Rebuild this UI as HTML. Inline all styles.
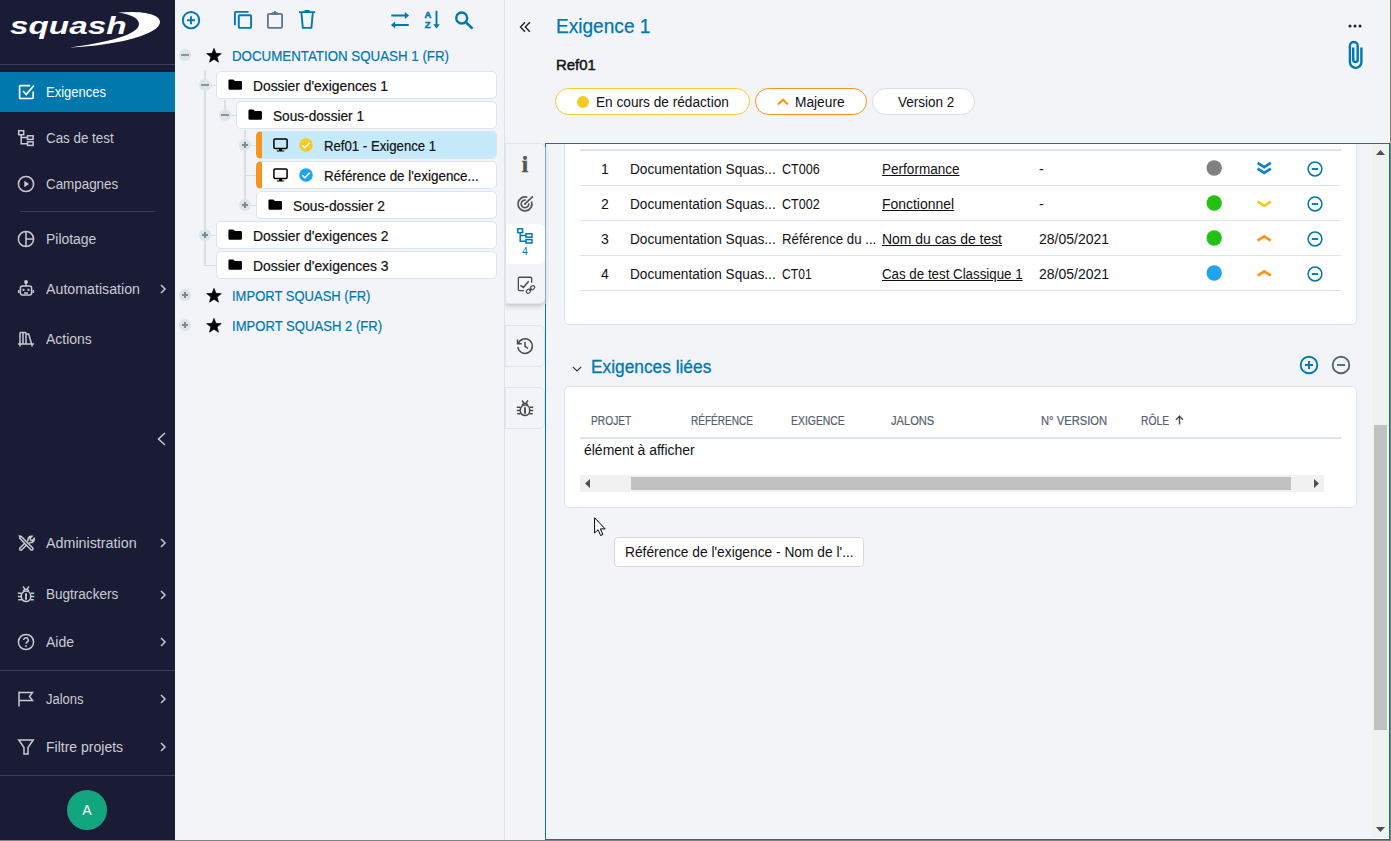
<!DOCTYPE html>
<html lang="fr">
<head>
<meta charset="utf-8">
<title>Exigence 1</title>
<style>
*{box-sizing:border-box;margin:0;padding:0}
html,body{width:1391px;height:841px;overflow:hidden;background:#f3f4f8}
body{position:relative;font-family:"Liberation Sans",sans-serif;font-size:14px;color:#111;}
.abs{position:absolute}
.t,.c,.tt,.it,.th{transform-origin:0 50%}
.t{position:absolute;white-space:nowrap;line-height:20px;height:20px}
svg{position:absolute;overflow:visible}
/* sidebar */
#side{position:absolute;left:0;top:0;width:175px;height:841px;background:#1a1c36}
#side .sep{position:absolute;height:1px;background:#3a3c63}
#side .it{position:absolute;left:46px;color:#cbcbd3;font-size:14px;line-height:20px;height:20px;white-space:nowrap}
#side .act{position:absolute;left:0;top:72px;width:175px;height:40px;background:#0078ae}
#side svg{stroke:#c9c9d2;fill:none;stroke-width:1.5}
/* tree */
#tree{position:absolute;left:175px;top:0;width:330px;height:841px;background:#f3f4f8;border-right:1px solid #dae3eb}
.box{position:absolute;height:28px;background:#fff;border:1px solid #dbe5ee;border-radius:5px}
.tl{position:absolute;background:#dddddd}
.tg{position:absolute;width:12px;height:12px;border-radius:50%;background:#dbe5ec}
.tg:before{content:"";position:absolute;left:2px;top:5px;width:8px;height:2px;background:#929292}
.tg.p:before{left:3px;top:5px;width:6px;height:2px;background:#868686}.tg.p:after{content:"";position:absolute;left:5px;top:3px;width:2px;height:6px;background:#868686}
.tt{position:absolute;white-space:nowrap;line-height:20px;height:20px;font-size:14px;color:#111;-webkit-text-stroke:.2px currentColor}
.pj{color:#0078ae}
/* main */
#main{position:absolute;left:505px;top:0;width:886px;height:841px;background:#f3f4f8}
.pill{position:absolute;top:88px;height:27px;border-radius:14px;background:#fff;border:1px solid #d9dfe6;font-size:14px;line-height:25px;white-space:nowrap}
#content{position:absolute;left:545px;top:143px;width:845px;height:697px;border:1px solid #0078ae;background:#f3f4f8}
.card{position:absolute;background:#fff;border:1px solid #dbe5ee;border-radius:5px}
.hl{position:absolute;left:580px;width:761px;height:1px;background:#dbe5ee}
.c{position:absolute;white-space:nowrap;line-height:20px;height:20px;font-size:14px;color:#111}
.u{text-decoration:underline}
.dot{position:absolute;width:15px;height:15px;border-radius:50%}
.th{position:absolute;top:411px;white-space:nowrap;line-height:20px;height:20px;font-size:12px;color:#55606b;-webkit-text-stroke:.2px #55606b}
</style>
</head>
<body>
<div id="side">
  <!-- logo -->
  <svg width="175" height="64" style="left:0;top:0;stroke:none" viewBox="0 0 175 64">
    <path d="M118 12.5 C142 10.5 160 14 160 22 C160 34 118 45.5 70 47.5 C106 42.5 139 35 139 24 C139 18 131 14.5 118 12.5 Z" fill="#fff" stroke="none"/>
    <text x="10" y="33.5" fill="#fff" stroke="none" font-family="Liberation Sans, sans-serif" font-weight="bold" font-style="italic" font-size="23.5" textLength="116.5" lengthAdjust="spacingAndGlyphs">squash</text>
  </svg>
  <div class="sep" style="left:0;top:64px;width:175px"></div>
  <div class="act"></div>
  <div class="it" style="transform:scaleX(0.9289);top:82px;color:#fff">Exigences</div>
  <div class="it" style="transform:scaleX(0.9558);top:128px">Cas de test</div>
  <div class="it" style="transform:scaleX(0.9563);top:174px">Campagnes</div>
  <div class="sep" style="left:20px;top:211px;width:135px"></div>
  <div class="it" style="transform:scaleX(0.9942);top:229px">Pilotage</div>
  <div class="it" style="transform:scaleX(1.0150);top:279px">Automatisation</div>
  <div class="it" style="transform:scaleX(0.9973);top:329px">Actions</div>
  <div class="it" style="transform:scaleX(1.0214);top:533px">Administration</div>
  <div class="it" style="transform:scaleX(0.9665);top:584px">Bugtrackers</div>
  <div class="it" style="transform:scaleX(0.9989);top:632px">Aide</div>
  <div class="sep" style="left:0;top:670px;width:175px"></div>
  <div class="it" style="transform:scaleX(0.9266);top:689px">Jalons</div>
  <div class="it" style="transform:scaleX(1.0009);top:737px">Filtre projets</div>
  <div class="sep" style="left:0;top:775px;width:175px"></div>
  <div class="abs" style="left:67px;top:790px;width:40px;height:40px;border-radius:50%;background:#13a57d;color:#fff;font-size:14px;line-height:40px;text-align:center">A</div>
  <!-- icons -->
  <svg width="18" height="18" style="left:17.500px;top:83px;stroke:#fff;stroke-width:1.700" viewBox="0 0 18 18"><path d="M15.2 8.5v6a1 1 0 0 1-1 1H2.6a1 1 0 0 1-1-1V3.6a1 1 0 0 1 1-1h9.6"/><path d="M5 8l3.2 3.4L16 2.5"/></svg>
  <svg width="18" height="18" style="left:17px;top:129px" viewBox="0 0 18 18"><rect x="1.7" y="1.7" width="5" height="4"/><rect x="10.5" y="6.8" width="5.6" height="3.6"/><rect x="10.5" y="12.8" width="5.6" height="3.6"/><path d="M4.2 5.7v9h6.3M4.2 8.6h6.3"/></svg>
  <svg width="18" height="18" style="left:17px;top:175px" viewBox="0 0 18 18"><circle cx="9" cy="9" r="7.6"/><path d="M7.3 5.8v6.4L12 9z" fill="#c9c9d2" stroke="none"/></svg>
  <svg width="18" height="18" style="left:17px;top:230px" viewBox="0 0 18 18"><circle cx="9" cy="9" r="7.6"/><path d="M9 1.4v15.2M9 9h7.6"/></svg>
  <svg width="18" height="18" style="left:17px;top:279px" viewBox="0 0 18 18"><circle cx="9" cy="3" r="1.2" fill="#c9c9d2"/><path d="M9 4v3"/><rect x="3.400" y="7" width="11.200" height="9" rx="2"/><path d="M1.700 11v3M16.300 11v3M7 14h4"/><rect x="5.5" y="9.8" width="2" height="2" fill="#c9c9d2" stroke="none"/><rect x="10.5" y="9.8" width="2" height="2" fill="#c9c9d2" stroke="none"/></svg>
  <svg width="18" height="18" style="left:17px;top:330px" viewBox="0 0 18 18"><path d="M3 2.5v11.5M6 2.5v11.5M9 2.5v11.5M3 2.5h6M9 4.5l2.6-.7 3 10.2M1 14h16M3 14v2.5M15 14v2.5"/></svg>
  <svg width="9" height="14" style="left:157px;top:432px" viewBox="0 0 9 14"><path d="M8 1L1.5 7 8 13"/></svg>
  <svg width="18" height="18" style="left:17px;top:534px" viewBox="0 0 18 18"><path d="M2.5 2l1.8.5L13 11.2l2.8 2.8a1.3 1.3 0 0 1-1.8 1.8L11.2 13 2.9 4.300z"/><path d="M7.5 9.500L2.800 14.200a1.300 1.300 0 0 0 1.800 1.800L9.300 11.300M10 7.500l1-1a3.500 3.500 0 0 1 4-4.200l-2 2 .5 1.700 1.700.5 2-2a3.500 3.500 0 0 1-4.200 4l-1 1"/></svg>
  <svg width="18" height="18" style="left:17px;top:585px" viewBox="0 0 18 18"><path d="M4.300 10.800a4.700 4.700 0 0 1 9.400 0v1a4.700 4.700 0 0 1-9.400 0z"/><path d="M9 8.200v6.600" stroke-width="1.900"/><path d="M6 1.500l2 2.600M12 1.500l-2 2.600M.800 8.300h3.500M.800 11.500h3.500M1.300 14.800h3.200M13.700 8.300h3.500M13.700 11.500h3.500M13.500 14.800h3.200"/><path d="M6.200 6.300a2.900 2.900 0 0 1 5.600 0"/></svg>
  <svg width="18" height="18" style="left:17px;top:633px" viewBox="0 0 18 18"><circle cx="9" cy="9" r="7.600"/><path d="M6.700 7a2.300 2.300 0 1 1 3.300 2.100c-.7.400-1 .8-1 1.700"/><circle cx="9" cy="13" r=".9" fill="#c9c9d2" stroke="none"/></svg>
  <svg width="18" height="18" style="left:17px;top:690px" viewBox="0 0 18 18"><path d="M2 1.500v15M2 2.500h13.500l-3 4 3 4H2"/></svg>
  <svg width="18" height="18" style="left:17px;top:738px" viewBox="0 0 18 18"><path d="M1.800 2h14.400L11 9.500v6.500H7V9.500z"/></svg>
  <!-- chevrons -->
  <svg width="6" height="10" style="left:160px;top:284px" viewBox="0 0 6 10"><path d="M1 1l4 4-4 4"/></svg>
  <svg width="6" height="10" style="left:160px;top:538px" viewBox="0 0 6 10"><path d="M1 1l4 4-4 4"/></svg>
  <svg width="6" height="10" style="left:160px;top:590px" viewBox="0 0 6 10"><path d="M1 1l4 4-4 4"/></svg>
  <svg width="6" height="10" style="left:160px;top:637px" viewBox="0 0 6 10"><path d="M1 1l4 4-4 4"/></svg>
  <svg width="6" height="10" style="left:160px;top:694px" viewBox="0 0 6 10"><path d="M1 1l4 4-4 4"/></svg>
  <svg width="6" height="10" style="left:160px;top:742px" viewBox="0 0 6 10"><path d="M1 1l4 4-4 4"/></svg>
</div>

<div id="tree"></div>
<!-- toolbar -->
<svg width="20" height="20" style="left:181px;top:9.700px" viewBox="0 0 20 20" fill="none" stroke="#0078ae" stroke-width="1.900"><circle cx="10" cy="10.200" r="8.200"/><path d="M10 6.200v8M6 10.200h8"/></svg>
<svg width="20" height="20" style="left:233px;top:9px" viewBox="0 0 20 20" fill="none" stroke="#0078ae" stroke-width="1.900"><rect x="5.800" y="6.300" width="12.300" height="12.600" rx="1"/><path d="M1.900 16.200V4a1.100 1.100 0 0 1 1.100-1.100H15.500"/></svg>
<svg width="20" height="20" style="left:265px;top:9.600px" viewBox="0 0 20 20" fill="none" stroke="#5f7687" stroke-width="1.800"><rect x="2.900" y="3.900" width="14.200" height="14" rx="1.200"/><path d="M6.800 4.400V2.900h1.900a1.300 1.300 0 0 1 2.600 0h1.900v1.500z" fill="#5f7687" stroke-width="1"/></svg>
<svg width="20" height="20" style="left:297px;top:9px" viewBox="0 0 20 20" fill="none" stroke="#0078ae" stroke-width="1.900" stroke-linejoin="round"><path d="M2 3.100h16.200M8.300 2.900V1.900h3.600v1M4.400 3.500l1.400 15.400h8.600l1.400-15.400"/></svg>
<svg width="20" height="20" style="left:390px;top:10px" viewBox="0 0 20 20" fill="none" stroke="#0078ae" stroke-width="1.900"><path d="M1.300 5.500h15M18.700 15h-15"/><path d="M14.800 2l4.300 3.500-4.300 3.500zM5.200 11.500L.900 15l4.300 3.500z" fill="#0078ae" stroke="none"/></svg>
<svg width="20" height="20" style="left:422px;top:10px" viewBox="0 0 20 20" fill="none" stroke="#0078ae" stroke-width="1.900"><path d="M14.500 .800v14.500"/><path d="M11.200 14.300h6.600l-3.300 4.200z" fill="#0078ae" stroke="none"/><text x="2.500" y="7.800" font-family="Liberation Sans, sans-serif" font-weight="bold" font-size="9.500" fill="#0078ae" stroke="#0078ae" stroke-width=".5">A</text><text x="2.800" y="18" font-family="Liberation Sans, sans-serif" font-weight="bold" font-size="9.500" fill="#0078ae" stroke="#0078ae" stroke-width=".5">Z</text></svg>
<svg width="20" height="20" style="left:454px;top:10px" viewBox="0 0 20 20" fill="none" stroke="#0078ae" stroke-width="2.300"><circle cx="7.700" cy="8" r="5.500"/><path d="M11.700 12l6.800 6.600" stroke-width="2.600"/></svg>
<!-- tree lines -->
<div class="tl" style="left:204px;top:70px;width:2px;height:196px"></div>
<div class="tl" style="left:205px;top:85px;width:11px;height:1px"></div>
<div class="tl" style="left:205px;top:235px;width:11px;height:1px"></div>
<div class="tl" style="left:205px;top:265px;width:11px;height:1px"></div>
<div class="tl" style="left:224px;top:100px;width:2px;height:16px"></div>
<div class="tl" style="left:225px;top:115px;width:11px;height:1px"></div>
<div class="tl" style="left:244px;top:130px;width:2px;height:76px"></div>
<div class="tl" style="left:245px;top:145px;width:11px;height:1px"></div>
<div class="tl" style="left:245px;top:175px;width:11px;height:1px"></div>
<div class="tl" style="left:245px;top:205px;width:11px;height:1px"></div>
<!-- toggles -->
<div class="tg" style="left:179px;top:49px"></div>
<div class="tg" style="left:199px;top:79px"></div>
<div class="tg" style="left:219px;top:109px"></div>
<div class="tg p" style="left:239px;top:139px"></div>
<div class="tg p" style="left:239px;top:199px"></div>
<div class="tg p" style="left:199px;top:229px"></div>
<div class="tg p" style="left:179px;top:289px"></div>
<div class="tg p" style="left:179px;top:319px"></div>
<!-- boxes -->
<div class="box" style="left:216px;top:71px;width:281px"></div>
<div class="box" style="left:236px;top:101px;width:261px"></div>
<div class="box" style="left:256px;top:131px;width:241px;background:#c5ebfb;border-left:6px solid #f7941d"></div>
<div class="box" style="left:256px;top:161px;width:241px;border-left:6px solid #f7941d"></div>
<div class="box" style="left:256px;top:191px;width:241px"></div>
<div class="box" style="left:216px;top:221px;width:281px"></div>
<div class="box" style="left:216px;top:251px;width:281px"></div>
<!-- stars -->
<svg width="16" height="16" style="left:206px;top:48px" viewBox="0 0 16 16"><polygon points="8.00,0.30 9.94,5.33 15.32,5.62 11.14,9.02 12.53,14.23 8.00,11.30 3.47,14.23 4.86,9.02 0.68,5.62 6.06,5.33" fill="#000" stroke="#000" stroke-width=".6" stroke-linejoin="round"/></svg>
<svg width="16" height="16" style="left:206px;top:288px" viewBox="0 0 16 16"><polygon points="8.00,0.30 9.94,5.33 15.32,5.62 11.14,9.02 12.53,14.23 8.00,11.30 3.47,14.23 4.86,9.02 0.68,5.62 6.06,5.33" fill="#000" stroke="#000" stroke-width=".6" stroke-linejoin="round"/></svg>
<svg width="16" height="16" style="left:206px;top:318px" viewBox="0 0 16 16"><polygon points="8.00,0.30 9.94,5.33 15.32,5.62 11.14,9.02 12.53,14.23 8.00,11.30 3.47,14.23 4.86,9.02 0.68,5.62 6.06,5.33" fill="#000" stroke="#000" stroke-width=".6" stroke-linejoin="round"/></svg>
<!-- folders -->
<svg width="14.4" height="11.7" style="left:227.8px;top:79.2px" viewBox="0 0 16 13"><path d="M1.500 0.500h4.500l1.600 1.700h6.600a1.300 1.300 0 0 1 1.300 1.300v7.200a1.300 1.300 0 0 1-1.300 1.300H1.800a1.300 1.300 0 0 1-1.300-1.300V1.800a1.300 1.300 0 0 1 1-1.300z" fill="#000"/></svg>
<svg width="14.4" height="11.7" style="left:247.8px;top:109.2px" viewBox="0 0 16 13"><path d="M1.500 0.500h4.500l1.600 1.700h6.600a1.300 1.300 0 0 1 1.300 1.300v7.200a1.300 1.300 0 0 1-1.300 1.300H1.800a1.300 1.300 0 0 1-1.300-1.300V1.800a1.300 1.300 0 0 1 1-1.300z" fill="#000"/></svg>
<svg width="14.4" height="11.7" style="left:267.8px;top:199.2px" viewBox="0 0 16 13"><path d="M1.500 0.500h4.500l1.600 1.700h6.600a1.300 1.300 0 0 1 1.300 1.300v7.200a1.300 1.300 0 0 1-1.300 1.300H1.800a1.300 1.300 0 0 1-1.300-1.300V1.800a1.300 1.300 0 0 1 1-1.300z" fill="#000"/></svg>
<svg width="14.4" height="11.7" style="left:227.8px;top:229.2px" viewBox="0 0 16 13"><path d="M1.500 0.500h4.500l1.600 1.700h6.600a1.300 1.300 0 0 1 1.300 1.300v7.200a1.300 1.300 0 0 1-1.300 1.300H1.800a1.300 1.300 0 0 1-1.300-1.300V1.800a1.300 1.300 0 0 1 1-1.300z" fill="#000"/></svg>
<svg width="14.4" height="11.7" style="left:227.8px;top:259.2px" viewBox="0 0 16 13"><path d="M1.500 0.500h4.500l1.600 1.700h6.600a1.300 1.300 0 0 1 1.300 1.300v7.200a1.300 1.300 0 0 1-1.300 1.300H1.800a1.300 1.300 0 0 1-1.300-1.300V1.800a1.300 1.300 0 0 1 1-1.300z" fill="#000"/></svg>
<!-- monitors + status -->
<svg width="15" height="14" style="left:272.500px;top:138px" viewBox="0 0 15 14" fill="none" stroke="#000" stroke-width="1.500"><rect x=".9" y=".9" width="13.200" height="9.600" rx="1.200"/><path d="M6.300 10.800h2.400l.5 1.700h2v1.100H3.800v-1.100h2z" fill="#000" stroke="none"/></svg>
<svg width="15" height="14" style="left:272.500px;top:168px" viewBox="0 0 15 14" fill="none" stroke="#000" stroke-width="1.500"><rect x=".9" y=".9" width="13.200" height="9.600" rx="1.200"/><path d="M6.300 10.800h2.400l.5 1.700h2v1.100H3.800v-1.100h2z" fill="#000" stroke="none"/></svg>
<svg width="14" height="14" style="left:299px;top:138px" viewBox="0 0 14 14"><circle cx="7" cy="7" r="6.800" fill="#f4ca25"/><path d="M3.300 7.200l2.500 2.500 4.900-5" fill="none" stroke="#fff" stroke-width="1.600"/></svg>
<svg width="14" height="14" style="left:299px;top:168px" viewBox="0 0 14 14"><circle cx="7" cy="7" r="6.800" fill="#1fa5ee"/><path d="M3.300 7.200l2.500 2.500 4.900-5" fill="none" stroke="#fff" stroke-width="1.600"/></svg>
<!-- labels -->
<div class="tt pj" style="transform:scaleX(0.9511);left:232px;top:46px">DOCUMENTATION SQUASH 1 (FR)</div>
<div class="tt" style="transform:scaleX(0.9888);left:253px;top:76px">Dossier d'exigences 1</div>
<div class="tt" style="transform:scaleX(0.9744);left:272.500px;top:106px">Sous-dossier 1</div>
<div class="tt" style="transform:scaleX(0.9422);left:324px;top:136px">Ref01 - Exigence 1</div>
<div class="tt" style="transform:scaleX(0.9583);left:324px;top:166px">Référence de l'exigence...</div>
<div class="tt" style="transform:scaleX(0.9830);left:292.500px;top:196px">Sous-dossier 2</div>
<div class="tt" style="transform:scaleX(0.9932);left:253px;top:226px">Dossier d'exigences 2</div>
<div class="tt" style="transform:scaleX(0.9932);left:253px;top:256px">Dossier d'exigences 3</div>
<div class="tt pj" style="transform:scaleX(0.9299);left:232px;top:286px">IMPORT SQUASH (FR)</div>
<div class="tt pj" style="transform:scaleX(0.9357);left:232px;top:316px">IMPORT SQUASH 2 (FR)</div>

<div id="main"></div>
<!-- header -->
<svg width="12" height="12" style="left:519px;top:21px" viewBox="0 0 12 12" fill="none" stroke="#222" stroke-width="1.400"><path d="M6 1.200L1.500 6 6 10.800M10.800 1.200L6.300 6l4.500 4.800"/></svg>
<div class="t" style="transform:scaleX(0.9784);left:556px;top:13px;font-size:19.500px;line-height:26px;height:26px;color:#0078ae;-webkit-text-stroke:.25px #0078ae">Exigence 1</div>
<div class="t" style="transform:scaleX(0.9619);left:556px;top:55px;font-size:15.500px;-webkit-text-stroke:.45px #111;color:#111">Ref01</div>
<div class="pill" style="left:555px;width:195px;border-color:#f5cc2f"></div>
<div class="pill" style="left:755px;width:112px;border-color:#f7941d"></div>
<div class="pill" style="left:872px;width:103px"></div>
<div class="abs" style="left:577px;top:96px;width:12px;height:12px;border-radius:50%;background:#f5cb26"></div>
<div class="t" style="transform:scaleX(0.9757);left:595.500px;top:91.500px">En cours de rédaction</div>
<svg width="12" height="8" style="left:777px;top:98px" viewBox="0 0 12 8" fill="none" stroke="#f7941d" stroke-width="2.100"><path d="M1 6.500L6 1.700l5 4.800"/></svg>
<div class="t" style="transform:scaleX(0.9804);left:795px;top:91.500px">Majeure</div>
<div class="t" style="transform:scaleX(0.9627);left:898px;top:91.500px">Version 2</div>
<svg width="14" height="4" style="left:1348px;top:24px" viewBox="0 0 14 4"><circle cx="2" cy="2" r="1.500" fill="#222"/><circle cx="7" cy="2" r="1.500" fill="#222"/><circle cx="12" cy="2" r="1.500" fill="#222"/></svg>
<svg width="17" height="31" style="left:1347px;top:40px" viewBox="0 0 17 31" fill="none" stroke="#0078ae" stroke-width="2.400" stroke-linecap="butt"><path d="M14.400 7.500V22.100a5.750 5.750 0 0 1-11.500 0V5.900a3.900 3.900 0 0 1 7.800 0V19.700a2.250 2.250 0 0 1-4.500 0V7.500"/></svg>
<!-- content frame -->
<div id="content"></div>
<!-- vertical scrollbar -->
<div class="abs" style="left:1372px;top:144px;width:17px;height:695px;background:#f1f1f1;border-bottom:1px solid #fff"></div>
<div class="abs" style="left:1374px;top:425px;width:13px;height:305px;background:#c1c1c1"></div>
<svg width="9" height="5" style="left:1376px;top:150px" viewBox="0 0 9 5"><path d="M0 5L4.500 0 9 5z" fill="#505050"/></svg>
<svg width="9" height="5" style="left:1376px;top:827px" viewBox="0 0 9 5"><path d="M0 0L4.500 5 9 0z" fill="#505050"/></svg>
<!-- side tabs -->
<div class="abs" style="left:505px;top:143px;width:40px;height:161px;background:#f3f4f8;border-radius:0 6px 6px 0;box-shadow:0 2px 5px rgba(0,0,0,.2);border:1px solid #dde6ee;border-right:none;clip-path:inset(0 -12px -12px 0)"></div>
<div class="abs" style="left:506px;top:224px;width:38.500px;height:40px;background:#fff;border-radius:0 6px 6px 0"></div>
<div class="abs" style="left:505px;top:325px;width:40px;height:42px;border:1px solid #dde6ee;border-radius:0 6px 6px 0"></div>
<div class="abs" style="left:505px;top:387px;width:40px;height:42px;border:1px solid #dde6ee;border-radius:0 6px 6px 0"></div>
<div class="abs" style="left:545px;top:147px;width:1px;height:157px;background:#7fb1cd"></div>
<!-- tab icons -->
<div class="t" style="left:518px;top:153px;width:14px;text-align:center;font-family:'Liberation Serif',serif;font-weight:bold;font-size:23px;line-height:24px;height:24px;color:#555;-webkit-text-stroke:.5px #555">i</div>
<svg width="18" height="18" style="left:516px;top:195px" viewBox="0 0 18 18" fill="none" stroke="#555" stroke-width="1.700"><path d="M15.580 6.500A7 7 0 1 1 11.390 2.320"/><path d="M12.740 8.240A3.800 3.800 0 1 1 9.660 5.160"/><circle cx="9" cy="8.900" r="1" fill="#555" stroke="none"/><path d="M9 8.900L16.900 1.300"/></svg>
<svg width="16" height="16" style="left:517px;top:228px" viewBox="0 0 16 16" fill="none" stroke="#0078ae" stroke-width="1.500"><rect x=".800" y=".800" width="4.800" height="3.800"/><rect x="9" y="5.800" width="6" height="3.400"/><rect x="9" y="11.600" width="6" height="3.400"/><path d="M3.200 4.600v8.700H9M3.200 7.500H9"/></svg>
<div class="t" style="left:515px;top:245px;width:20px;text-align:center;font-size:10px;line-height:14px;height:14px;color:#0078ae">4</div>
<svg width="19" height="19" style="left:517px;top:276px" viewBox="0 0 19 19" fill="none" stroke="#4a4a4a" stroke-width="1.300"><path d="M14.650 6.700V2.550a1.300 1.300 0 0 0-1.300-1.300H2.650a1.300 1.300 0 0 0-1.300 1.300v10.700a1.300 1.300 0 0 0 1.300 1.300H6.900"/><path d="M3.500 9.300L6.400 11.500 11.700 5.200" stroke-width="1.600"/><g transform="translate(13.500 13.450) rotate(-40)" stroke-width="1.200"><rect x="-5" y="-1.700" width="4.600" height="3.400" rx="1.700"/><rect x=".400" y="-1.700" width="4.600" height="3.400" rx="1.700"/><path d="M-1.600 0h3.200"/></g></svg>
<svg width="18" height="18" style="left:516px;top:337px" viewBox="0 0 18 18" fill="none" stroke="#4a4a4a" stroke-width="1.500"><path d="M2.200 6.500A7.300 7.300 0 1 1 1.800 10"/><path d="M1.500 2.500v4.300h4.300M9 5v4.300l3 2"/></svg>
<svg width="18" height="18" style="left:516px;top:399px" viewBox="0 0 18 18" fill="none" stroke="#4a4a4a" stroke-width="1.500"><path d="M4.300 10.800a4.700 4.700 0 0 1 9.400 0v1a4.700 4.700 0 0 1-9.400 0z"/><path d="M9 8.200v6.600" stroke-width="1.900"/><path d="M6 1.500l2 2.600M12 1.500l-2 2.600M.800 8.300h3.500M.800 11.500h3.500M1.300 14.800h3.200M13.700 8.300h3.500M13.700 11.500h3.500M13.500 14.800h3.200"/><path d="M6.200 6.300a2.900 2.900 0 0 1 5.600 0" /></svg>
<!-- card 1 -->
<div class="card" style="left:564px;top:130px;width:793px;height:195px;border-top:none;border-radius:0 0 5px 5px;clip-path:inset(14px 0 0 0)"></div>
<div class="hl" style="top:149px;height:2px"></div>
<div class="hl" style="top:185px"></div>
<div class="hl" style="top:220px"></div>
<div class="hl" style="top:255px"></div>
<div class="hl" style="top:290px"></div>
<!-- rows -->
<div class="c" style="left:595px;top:159px;width:20px;text-align:center">1</div>
<div class="c" style="left:595px;top:194px;width:20px;text-align:center">2</div>
<div class="c" style="left:595px;top:229px;width:20px;text-align:center">3</div>
<div class="c" style="left:595px;top:264px;width:20px;text-align:center">4</div>
<div class="c" style="transform:scaleX(0.9751);left:630px;top:159px">Documentation Squas...</div>
<div class="c" style="transform:scaleX(0.9751);left:630px;top:194px">Documentation Squas...</div>
<div class="c" style="transform:scaleX(0.9751);left:630px;top:229px">Documentation Squas...</div>
<div class="c" style="transform:scaleX(0.9751);left:630px;top:264px">Documentation Squas...</div>
<div class="c" style="transform:scaleX(0.8970);left:782px;top:159px">CT006</div>
<div class="c" style="transform:scaleX(0.8970);left:782px;top:194px">CT002</div>
<div class="c" style="transform:scaleX(0.9465);left:782px;top:229px">Référence du ...</div>
<div class="c" style="transform:scaleX(0.8675);left:782px;top:264px">CT01</div>
<div class="c u" style="transform:scaleX(0.9681);left:882px;top:159px">Performance</div>
<div class="c u" style="transform:scaleX(0.9960);left:882px;top:194px">Fonctionnel</div>
<div class="c u" style="transform:scaleX(0.9948);left:882px;top:229px">Nom du cas de test</div>
<div class="c u" style="transform:scaleX(0.9509);left:882px;top:264px">Cas de test Classique 1</div>
<div class="c" style="left:1039px;top:159px">-</div>
<div class="c" style="left:1039px;top:194px">-</div>
<div class="c" style="transform:scaleX(1.0003);left:1039px;top:229px">28/05/2021</div>
<div class="c" style="transform:scaleX(1.0003);left:1039px;top:264px">28/05/2021</div>
<svg width="16" height="16" style="left:1206px;top:160px" viewBox="0 0 16 16"><circle cx="8.200" cy="8" r="7.700" fill="#808080"/></svg>
<svg width="16" height="16" style="left:1206px;top:195px" viewBox="0 0 16 16"><circle cx="8.200" cy="8" r="7.700" fill="#22c113"/></svg>
<svg width="16" height="16" style="left:1206px;top:230px" viewBox="0 0 16 16"><circle cx="8.200" cy="8" r="7.700" fill="#22c113"/></svg>
<svg width="16" height="16" style="left:1206px;top:265px" viewBox="0 0 16 16"><circle cx="8.200" cy="8" r="7.700" fill="#1fa5ee"/></svg>
<svg width="15" height="14" style="left:1256.700px;top:161px" viewBox="0 0 15 14" fill="none" stroke="#0f7fd0" stroke-width="2.700"><path d="M.600 1.800l6.600 4.300 6.600-4.300M.600 7.600l6.600 4.300 6.600-4.300"/></svg>
<svg width="15" height="8" style="left:1256.700px;top:199.500px" viewBox="0 0 15 8" fill="none" stroke="#f5cb26" stroke-width="2.700"><path d="M.600 1.500l6.600 4.300 6.600-4.300"/></svg>
<svg width="15" height="8" style="left:1256.700px;top:234px" viewBox="0 0 15 8" fill="none" stroke="#ff9417" stroke-width="2.700"><path d="M.600 6.700l6.600-4.300 6.600 4.300"/></svg>
<svg width="15" height="8" style="left:1256.700px;top:269px" viewBox="0 0 15 8" fill="none" stroke="#ff9417" stroke-width="2.700"><path d="M.600 6.700l6.600-4.300 6.600 4.300"/></svg>
<svg width="16" height="16" style="left:1307px;top:161px" viewBox="0 0 16 16" fill="none" stroke="#0078ae" stroke-width="1.500"><circle cx="8" cy="8" r="6.900"/><path d="M4.800 8h6.400" stroke-width="1.900"/></svg>
<svg width="16" height="16" style="left:1307px;top:196px" viewBox="0 0 16 16" fill="none" stroke="#0078ae" stroke-width="1.500"><circle cx="8" cy="8" r="6.900"/><path d="M4.800 8h6.400" stroke-width="1.900"/></svg>
<svg width="16" height="16" style="left:1307px;top:231px" viewBox="0 0 16 16" fill="none" stroke="#0078ae" stroke-width="1.500"><circle cx="8" cy="8" r="6.900"/><path d="M4.800 8h6.400" stroke-width="1.900"/></svg>
<svg width="16" height="16" style="left:1307px;top:266px" viewBox="0 0 16 16" fill="none" stroke="#0078ae" stroke-width="1.500"><circle cx="8" cy="8" r="6.900"/><path d="M4.800 8h6.400" stroke-width="1.900"/></svg>
<!-- section 2 -->
<svg width="10" height="6" style="left:572px;top:366px" viewBox="0 0 10 6" fill="none" stroke="#333" stroke-width="1.200"><path d="M.800.800L5 5 9.200.800"/></svg>
<div class="t" style="transform:scaleX(0.9892);left:590.500px;top:355px;font-size:17.500px;line-height:24px;height:24px;color:#0078ae;-webkit-text-stroke:.3px #0078ae">Exigences liées</div>
<svg width="20" height="20" style="left:1299px;top:355px" viewBox="0 0 20 20" fill="none" stroke="#0078ae" stroke-width="1.900"><circle cx="10" cy="10" r="8.300"/><path d="M10 6v8M6 10h8"/></svg>
<svg width="20" height="20" style="left:1331px;top:355px" viewBox="0 0 20 20" fill="none" stroke="#566673" stroke-width="1.900"><circle cx="10" cy="10" r="8.300"/><path d="M6 10h8"/></svg>
<div class="card" style="left:564px;top:386px;width:793px;height:122px"></div>
<div class="th" style="transform:scaleX(0.8512);left:591px">PROJET</div>
<div class="th" style="transform:scaleX(0.8363);left:691px">RÉFÉRENCE</div>
<div class="th" style="transform:scaleX(0.8675);left:791px">EXIGENCE</div>
<div class="th" style="transform:scaleX(0.9253);left:891px">JALONS</div>
<div class="th" style="transform:scaleX(0.9349);left:1041px">N° VERSION</div>
<div class="th" style="transform:scaleX(0.8597);left:1141px">RÔLE</div>
<svg width="9" height="10" style="left:1175px;top:415px" viewBox="0 0 9 10" fill="none" stroke="#4a4a4a" stroke-width="1.400"><path d="M4.500 9.500V1.500M1 4.800l3.500-3.500L8 4.800"/></svg>
<div class="hl" style="top:437px;height:2px"></div>
<div class="c" style="transform:scaleX(0.9970);left:584px;top:440px">élément à afficher</div>
<div class="abs" style="left:580px;top:475px;width:744px;height:17px;background:#f1f1f1"></div>
<div class="abs" style="left:631px;top:477px;width:660px;height:13px;background:#c1c1c1"></div>
<svg width="5" height="9" style="left:585px;top:479px" viewBox="0 0 5 9"><path d="M5 0L0 4.500 5 9z" fill="#505050"/></svg>
<svg width="5" height="9" style="left:1314px;top:479px" viewBox="0 0 5 9"><path d="M0 0l5 4.500L0 9z" fill="#505050"/></svg>
<!-- cursor -->
<svg width="13" height="20" style="left:594px;top:517px" viewBox="0 0 13 20"><path d="M.600.800v15.200l3.500-3.300 2.500 5.800 2.300-1-2.500-5.600h4.800z" fill="#fff" stroke="#000" stroke-width="1"/></svg>
<!-- tooltip -->
<div class="abs" style="left:614px;top:537px;width:250px;height:30px;background:#fff;border:1px solid #d9d9d9;border-radius:4px"></div>
<div class="c" style="transform:scaleX(0.9829);left:625px;top:542px">Référence de l'exigence - Nom de l'...</div>
<!-- bottom window line -->
<div class="abs" style="left:0;top:840px;width:1391px;height:1px;background:#85807d"></div>
<div class="abs" style="left:1390px;top:0;width:1px;height:841px;background:#85807d"></div>

</body>
</html>
